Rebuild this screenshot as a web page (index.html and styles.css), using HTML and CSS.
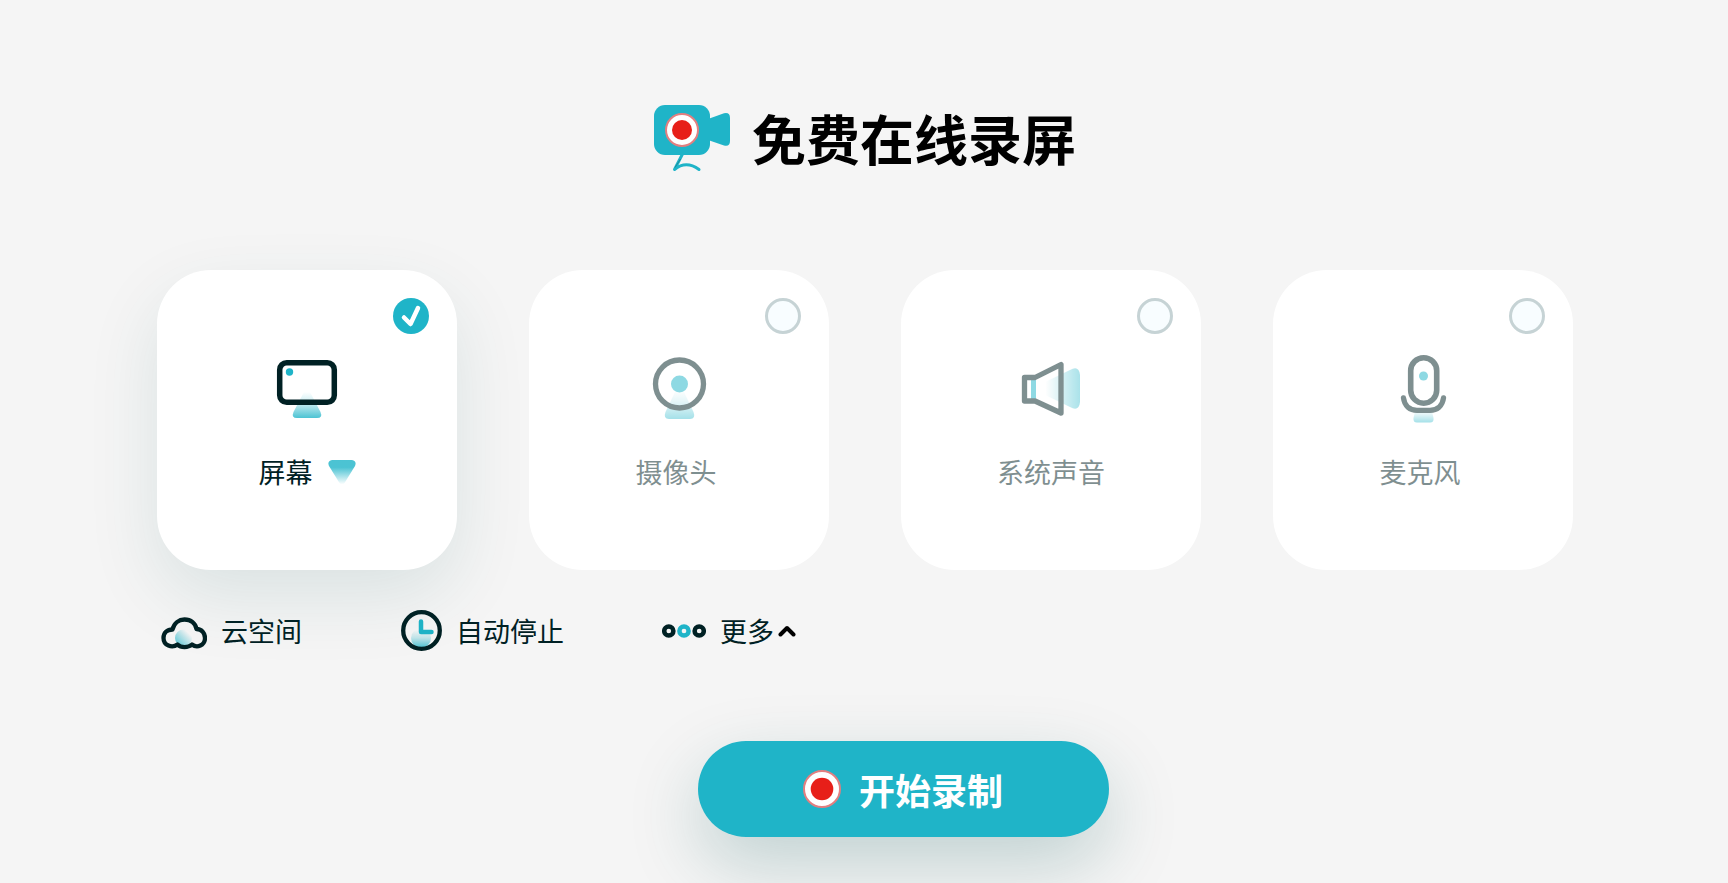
FILE: index.html
```html
<!DOCTYPE html>
<html lang="zh-CN">
<head>
    <meta charset="UTF-8">
    <meta name="viewport" content="width=device-width, initial-scale=1.0">
    <title>免费在线录屏</title>
    <link rel="stylesheet" href="styles.css">
</head>
<body>
    <main class="container">
        <header class="header">
            <svg class="logo" viewBox="0 0 76 72" aria-hidden="true">
                <path d="M54 14 L70 8.3 Q76 7 76 13 V36 Q76 42 70 40.5 L54 35 Z" fill="#1fb4c8"/>
                <rect width="56" height="50" rx="11" fill="#1fb4c8"/>
                <circle cx="28" cy="25" r="16" fill="#fff" stroke="#e27f80" stroke-width="2"/>
                <circle cx="28" cy="25" r="10" fill="#e71f19"/>
                <path d="M28.5 49 L20.5 64.5 Q32 55 45 64.5" fill="none" stroke="#1fb4c8" stroke-width="3" stroke-linecap="round" stroke-linejoin="round"/>
                <path d="M26.5 54 L21 62.5" stroke="#188a9a" stroke-width="1"/>
            </svg>
            <h1>免费在线录屏</h1>
        </header>

        <section class="cards">
            <div class="card active">
                <input class="check" type="checkbox" id="screen" checked>
                <label for="screen">
                    <svg class="icon" viewBox="0 0 84 84" aria-hidden="true">
                        <defs>
                            <linearGradient id="stand" x1="0" y1="0" x2="0" y2="1">
                                <stop offset=".1" stop-color="#1fb4c8" stop-opacity="0"/>
                                <stop offset=".5" stop-color="#1fb4c8" stop-opacity=".25"/>
                                <stop offset="1" stop-color="#1fb4c8" stop-opacity=".8"/>
                            </linearGradient>
                        </defs>
                        <path d="M39.5 45 Q42 41 44.5 45 L55.5 66 Q58 72 52 72 H32 Q26 72 28.5 66 Z" fill="url(#stand)"/>
                        <rect x="14.7" y="16.7" width="54.6" height="39.6" rx="7" fill="none" stroke="#002124" stroke-width="5.5"/>
                        <circle cx="24.5" cy="26" r="3.7" fill="#1fb4c8"/>
                    </svg>
                </label>
                <div class="name">
                    <label for="screen">屏幕</label>
                    <button class="drop" type="button" aria-label="选择屏幕">
                        <svg viewBox="0 0 28 26" aria-hidden="true">
                            <defs>
                                <linearGradient id="arrow" x1="0" y1="0" x2="0" y2="1">
                                    <stop offset=".3" stop-color="#1fb4c8" stop-opacity=".8"/>
                                    <stop offset="1" stop-color="#1fb4c8" stop-opacity="0"/>
                                </linearGradient>
                            </defs>
                            <path d="M4 1 H24 Q29 2 27 7 L16.5 24 Q14 27 11.5 24 L1 7 Q-1 2 4 1 Z" fill="url(#arrow)"/>
                        </svg>
                    </button>
                </div>
            </div>

            <div class="card">
                <input class="check" type="checkbox" id="camera">
                <label for="camera">
                    <svg class="icon" viewBox="0 0 84 84" aria-hidden="true">
                        <path d="M39 44 Q42.5 38 46 44 L56.5 66 Q59 73 53 73 H32 Q26 73 28.5 66 Z" fill="url(#stand)"/>
                        <circle cx="42.5" cy="38" r="24" fill="none" stroke="#002124" stroke-width="5.3"/>
                        <circle cx="42.5" cy="38" r="8.5" fill="#1fb4c8"/>
                    </svg>
                </label>
                <div class="name"><label for="camera">摄像头&nbsp;</label></div>
            </div>

            <div class="card">
                <input class="check" type="checkbox" id="system">
                <label for="system">
                    <svg class="icon" viewBox="0 0 84 84" aria-hidden="true">
                        <defs>
                            <linearGradient id="wave" x1="0" y1="0" x2="1" y2="0">
                                <stop offset=".2" stop-color="#1fb4c8" stop-opacity="0"/>
                                <stop offset="1" stop-color="#1fb4c8" stop-opacity=".75"/>
                            </linearGradient>
                        </defs>
                        <path d="M28 40 L61 24 Q70 19 71 29 V56 Q70 66 61 61 L28 45 Z" fill="url(#wave)"/>
                        <rect x="22" y="34" width="5" height="19" fill="#1fb4c8"/>
                        <path d="M15.5 31.5 H26 L52 18.5 V67 L26 55 H15.5 Z" fill="none" stroke="#002124" stroke-width="5.3" stroke-linejoin="round"/>
                    </svg>
                </label>
                <div class="name"><label for="system">系统声音</label></div>
            </div>

            <div class="card">
                <input class="check" type="checkbox" id="mic">
                <label for="mic">
                    <svg class="icon" viewBox="0 0 84 84" aria-hidden="true">
                        <path d="M35 61 H50 L52.5 72 Q53 76.500 49 76.500 H36 Q32 76.500 32.500 72 Z" fill="url(#stand)"/>
                        <rect x="29.7" y="11.7" width="26" height="45.5" rx="13" fill="none" stroke="#002124" stroke-width="5.6"/>
                        <path d="M22.5 52 C23.5 60 29 64.3 36 64.3 H49 C56 64.3 61.5 60 62.5 52" fill="none" stroke="#002124" stroke-width="5.3" stroke-linecap="round"/>
                        <circle cx="42.5" cy="30" r="4.5" fill="#1fb4c8"/>
                    </svg>
                </label>
                <div class="name"><label for="mic">麦克风&nbsp;</label></div>
            </div>
        </section>

        <section class="options">
            <button class="option" type="button">
                <svg width="46" height="42" viewBox="0 0 46 42" aria-hidden="true">
                    <defs>
                        <linearGradient id="cloud" x1="1" y1="0" x2="0" y2="1">
                            <stop offset=".2" stop-color="#1fb4c8" stop-opacity="0"/>
                            <stop offset="1" stop-color="#1fb4c8" stop-opacity=".8"/>
                        </linearGradient>
                    </defs>
                    <circle cx="22.5" cy="28" r="8.5" fill="url(#cloud)"/>
                    <path d="M11.5 19.5 C13 13 18 9.5 23.5 9.5 C30 9.5 34.5 13.5 35.5 19 C41 19 44 23.5 44 28 C44 35.5 36 38.5 31 34.5 C27 38 20 38 16.5 34.5 C11 38.5 2.5 35.5 2.5 28 C2.5 23 6 19.5 11.5 19.5 Z" fill="none" stroke="#002124" stroke-width="4.3" stroke-linejoin="round"/>
                </svg>
                云空间
            </button>
            <button class="option" type="button">
                <svg width="42" height="42" viewBox="0 0 42 42" aria-hidden="true">
                    <circle cx="21" cy="28" r="10" fill="url(#stand)"/>
                    <circle cx="21.5" cy="20.5" r="18.3" fill="none" stroke="#002124" stroke-width="4.3"/>
                    <path d="M21 11.5 V22 H31.5" fill="none" stroke="#1fb4c8" stroke-width="4.5" stroke-linecap="round" stroke-linejoin="round"/>
                </svg>
                自动停止
            </button>
            <button class="option" type="button">
                <svg width="44" height="42" viewBox="0 0 44 42" fill="none" stroke="#002124" stroke-width="4.5" aria-hidden="true">
                    <circle cx="6.8" cy="21" r="4.6"/>
                    <circle cx="22" cy="21" r="4.6" stroke="#1fb4c8"/>
                    <circle cx="37.2" cy="21" r="4.6"/>
                </svg>
                更多
                <svg class="caret" width="18" height="12" viewBox="0 0 18 12" aria-hidden="true">
                    <path d="M2.5 9.5 L9 3 L15.5 9.5" fill="none" stroke="#000" stroke-width="4" stroke-linecap="round" stroke-linejoin="round"/>
                </svg>
            </button>
        </section>

        <div class="actions">
            <button class="start" type="button">
                <svg width="38" height="40" viewBox="0 0 38 40" aria-hidden="true">
                    <circle cx="19" cy="20" r="18" fill="#fff" stroke="#e27f80" stroke-width="2"/>
                    <circle cx="19" cy="20" r="11.3" fill="#e71f19"/>
                </svg>
                开始录制
            </button>
        </div>
    </main>
</body>
</html>
```

FILE: styles.css
```css
* {
    margin: 0;
    padding: 0;
    box-sizing: border-box;
}

body {
    background: #f5f5f5;
    color: #002124;
    font-family: "Noto Sans CJK SC", sans-serif;
    font-size: 27px;
    font-weight: 400;
    line-height: 36px;
}

svg {
    display: block;
    flex-shrink: 0;
}

button {
    border: none;
    background: none;
    color: inherit;
    font: inherit;
    cursor: pointer;
}

.container {
    max-width: 1418px;
    min-height: 100vh;
    margin: 0 auto;
    padding: 105px 0 24px 2px;
}

.header {
    display: flex;
    justify-content: center;
    align-items: flex-start;
    gap: 22px;
    margin-bottom: 93px;
}

.logo {
    width: 76px;
    height: 72px;
}

h1 {
    color: #000;
    font-size: 54px;
    font-weight: 700;
    line-height: 66px;
}

.cards {
    display: grid;
    grid-template-columns: repeat(4, 1fr);
    gap: 72px;
}

.card {
    position: relative;
    display: flex;
    flex-direction: column;
    align-items: center;
    gap: 24px;
    aspect-ratio: 1;
    padding-top: 76px;
    background: #fff;
    border-radius: 54px;
}

.card.active {
    box-shadow: 0 27px 72px rgba(0, 80, 80, 0.11);
}

.card label {
    cursor: pointer;
    opacity: 0.5;
}

.card.active label {
    opacity: 1;
}

.icon {
    width: 84px;
    height: 84px;
}

.name {
    display: flex;
    align-items: center;
    gap: 15px;
}

.drop svg {
    width: 28px;
    height: 26px;
}

/* round check in the card corner */
.check {
    position: absolute;
    top: 28px;
    right: 28px;
    width: 36px;
    height: 36px;
    appearance: none;
    background: #f8fdff;
    border: 3px solid #c6d3d5;
    border-radius: 50%;
    cursor: pointer;
}

.check:checked {
    border: none;
    background: #1fb4c8 url("data:image/svg+xml,%3Csvg xmlns='http://www.w3.org/2000/svg' viewBox='0 0 36 36'%3E%3Cpath d='M11 19.5 L17.5 26 L25 10' fill='none' stroke='%23fff' stroke-width='4.5' stroke-linecap='round' stroke-linejoin='round'/%3E%3C/svg%3E");
}

.options {
    display: flex;
    flex-wrap: wrap;
    gap: 98px;
    margin-top: 37px;
    padding-left: 4px;
}

.option {
    display: flex;
    align-items: center;
    gap: 14px;
    height: 48px;
}

.caret {
    margin-left: -10px;
}

.actions {
    display: flex;
    justify-content: center;
    margin-top: 86px;
    padding-left: 76px;
}

.start {
    display: flex;
    justify-content: center;
    align-items: center;
    gap: 18px;
    min-width: 411px;
    height: 96px;
    background: #1fb4c8;
    border-radius: 48px;
    color: #fff;
    font-size: 36px;
    font-weight: 700;
    box-shadow: 0 27px 72px rgba(0, 80, 80, 0.22);
}
```
